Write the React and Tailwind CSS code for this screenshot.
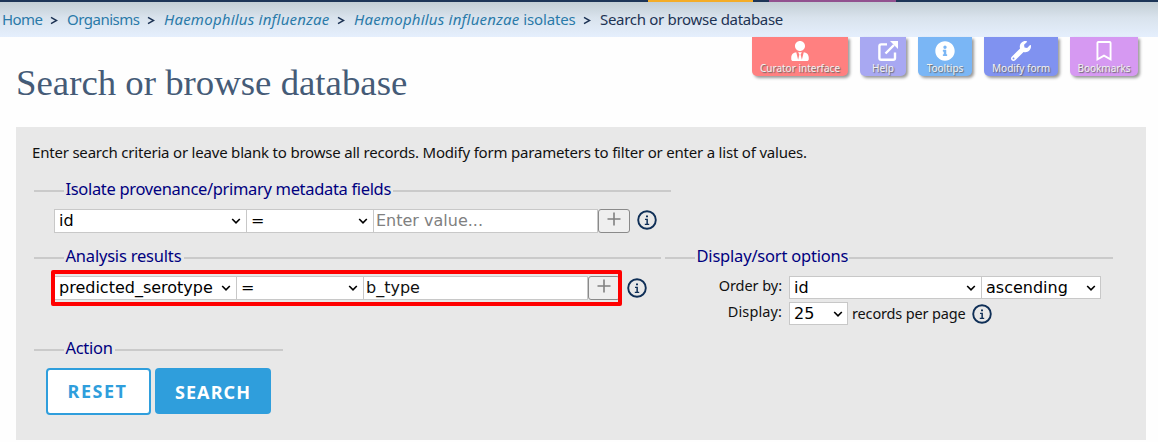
import { FaUserTie, FaWrench, FaRegBookmark, FaInfoCircle } from "react-icons/fa";

const Crumb = ({ children, className = "" }) => (
  <span className={`shrink-0 whitespace-nowrap ${className}`}>{children}</span>
);

const Sep = () => (
  <span className="flex w-[27px] shrink-0 justify-center">
    <svg width="9" height="10" viewBox="0 0 9 10" className="mt-[2px]">
      <path d="M2 1.4 7.6 4.5 2 7.6" fill="none" stroke="#1d3354" strokeWidth="1.5" />
    </svg>
  </span>
);

const Tab = ({ label, icon, className }) => (
  <div className={`flex h-[39px] flex-col items-center rounded-b-[5px] pt-[3px] text-white shadow-[2px_2px_3px_#999] ${className}`}>
    <div className="flex h-[22px] items-center justify-center">{icon}</div>
    <span className="text-[10px] leading-[13px] whitespace-nowrap text-[#f2f2f2] [text-shadow:1px_1px_1px_#666]">{label}</span>
  </div>
);

const ExternalIcon = () => (
  <svg width="22" height="22" viewBox="0 0 22 22" className="mb-px ml-[9px] shrink-0" fill="none" stroke="white" strokeWidth="2.4">
    <path d="M10 4.4H4.2Q2.4 4.4 2.4 6.2V18Q2.4 19.8 4.2 19.8H16.2Q18 19.8 18 18V12.5" />
    <path d="M8.5 13.5 17 5" />
    <path d="M13 1H21V9Z" fill="white" stroke="none" />
  </svg>
);

const Legend = ({ children, className, textClass = "" }) => (
  <div className={`flex h-6 items-center text-[16.5px] text-[#00007f] ${className}`}>
    <span className="mt-[4px] mr-[1.5px] h-[2px] w-[30px] shrink-0 bg-[#cacaca]" />
    <span className={`shrink-0 whitespace-nowrap ${textClass}`}>{children}</span>
    <span className="mt-[4px] h-[2px] flex-1 bg-[#cacaca]" />
  </div>
);

const Select = ({ children, className }) => (
  <div className={`flex shrink-0 items-center justify-between border border-[#c8c8c8] bg-white pr-[4px] pl-1 font-['DejaVu_Sans',sans-serif] text-[16px] leading-5 text-black ${className}`}>
    <span>{children}</span>
    <svg width="10" height="7" viewBox="0 0 10 7" className="mt-[1px]">
      <path d="M1.2 1 5 4.9 8.8 1" fill="none" stroke="#000" strokeWidth="1.6" />
    </svg>
  </div>
);

const Input = ({ children, className }) => (
  <div className={`flex h-6 shrink-0 items-center border border-[#c8c8c8] bg-white pl-[2px] font-['DejaVu_Sans',sans-serif] text-[16px] leading-5 ${className}`}>
    {children}
  </div>
);

const Plus = () => (
  <div className="flex h-6 w-8 shrink-0 justify-center rounded-[3px] border border-[#8a8a8a] bg-[#efefef]">
    <svg width="14" height="14" viewBox="0 0 14 14" className="mt-[2px]">
      <path d="M7 .5V13.5M.5 7H13.5" stroke="#808080" strokeWidth="1.6" />
    </svg>
  </div>
);

const Info = ({ className }) => (
  <svg width="20" height="20" viewBox="0 0 20 20" className={`shrink-0 ${className}`}>
    <circle cx="10" cy="10" r="8.8" fill="none" stroke="#0f2f57" strokeWidth="1.9" />
    <path d="M9 5.4H11V7.3H9ZM8 8.8H10.9V13.8H12.2V15H7.8V13.8H9.4V10H8Z" fill="#0f2f57" />
  </svg>
);

export default function App() {
  return (
    <div className="flex h-[442px] w-[1158px] flex-col overflow-hidden bg-[#fefefe] font-['Noto_Sans',sans-serif] text-[#111]">
      <div className="flex h-[2px] shrink-0 bg-[#1d3557]">
        <span className="ml-[648px] w-[105px] bg-[#f4ac26]" />
        <span className="ml-4 w-[127px] bg-[#92518f]" />
      </div>
      <nav className="h-[35px] shrink-0 bg-[#e5effd]">
        <div className="flex h-[35px] w-full items-center bg-linear-to-b from-[#c3ced5] via-[#d9e3ed] via-45% to-[#e5effd] pl-[2px] text-[15px] text-[#2a7aa9]">
          <Crumb className="w-[38px] tracking-[-0.6px]">Home</Crumb>
          <Sep />
          <Crumb className="w-[70px] tracking-[-0.5px]">Organisms</Crumb>
          <Sep />
          <Crumb className="w-[163px] tracking-[0.22px] italic">Haemophilus influenzae</Crumb>
          <Sep />
          <Crumb className="w-[219px]"><i className="tracking-[0.22px]">Haemophilus influenzae</i><span className="tracking-[-0.15px]"> isolates</span></Crumb>
          <Sep />
          <Crumb className="tracking-[-0.3px] text-[#1d3354]">Search or browse database</Crumb>
        </div>
      </nav>
      <header className="flex h-[90px] shrink-0 items-start pl-4">
        <h1 className="mt-[24px] w-[736px] font-['Liberation_Serif',serif] text-[36.8px] leading-[44px] whitespace-nowrap text-[#455b77]">Search or browse database</h1>
        <Tab className="w-24 bg-[#ff8080]" label="Curator interface" icon={<FaUserTie size={20} />} />
        <Tab className="ml-3 w-[46px] bg-[#a8a8f2]" label="Help" icon={<ExternalIcon />} />
        <Tab className="ml-3 w-[54px] bg-[#7ab6f5]" label="Tooltips" icon={<FaInfoCircle size={20} />} />
        <Tab className="ml-3 w-[74px] bg-[#8092f0]" label="Modify form" icon={<FaWrench size={20} />} />
        <Tab className="ml-3 w-[68px] bg-[#d699f2]" label="Bookmarks" icon={<FaRegBookmark size={20} />} />
      </header>
      <main className="ml-4 h-[313px] w-[1130px] shrink-0 bg-[#e8e8e8] pl-[18px]">
        <p className="-ml-[2px] pt-[13px] text-[15px] leading-6 tracking-[-0.2px] whitespace-nowrap">Enter search criteria or leave blank to browse all records. Modify form parameters to filter or enter a list of values.</p>
        <Legend className="mt-[13px] w-[637px]" textClass="w-[327px] tracking-[-0.33px]">Isolate provenance/primary metadata fields</Legend>
        <div className="mt-[8px] flex items-center pl-5">
          <Select className="h-6 w-[193px] pr-[5px]">id</Select>
          <Select className="-ml-px h-6 w-[128px] pr-[5px]">=</Select>
          <Input className="-ml-px w-[225px] text-[#808080]">Enter value...</Input>
          <Plus />
          <Info className="mb-[3px] ml-[7px]" />
        </div>
        <div className="mt-[11px] flex">
          <section className="w-[627px]">
            <Legend textClass="w-[118px] tracking-[-0.2px]">Analysis results</Legend>
            <div className="relative mt-2 flex items-center pl-5">
              <Select className="h-6 w-[183px] pr-[5px]">predicted_serotype</Select>
              <Select className="-ml-px h-6 w-[128px] pr-[5px]">=</Select>
              <Input className="-ml-px w-[225px]">b_type</Input>
              <Plus />
              <Info className="ml-[7px]" />
              <div className="absolute -top-[6px] left-[17px] h-9 w-[571px] rounded-[2px] border-4 border-[#ff0000]" />
            </div>
          </section>
          <section className="ml-1 w-[448px]">
            <Legend textClass="w-[152px] tracking-[-0.2px]">Display/sort options</Legend>
            <div className="mt-2 flex h-[23px] items-center text-[14.5px]">
              <span className="mr-[7px] mb-1 w-[117px] text-right tracking-[-0.05px] whitespace-nowrap">Order by:</span>
              <Select className="h-[23px] w-[193px] pr-[5px]">id</Select>
              <Select className="-ml-px h-[23px] w-[120px]">ascending</Select>
            </div>
            <div className="mt-[3px] flex h-[23px] items-center text-[14.5px]">
              <span className="mr-[7px] mb-1 w-[117px] text-right tracking-[0.1px]">Display:</span>
              <Select className="h-[23px] w-[59px]">25</Select>
              <span className="ml-[4px] w-[120px] tracking-[-0.15px] whitespace-nowrap">records per page</span>
              <Info />
            </div>
          </section>
        </div>
        <Legend className="mt-[11px] w-[249px]" textClass="w-[49px] tracking-[-0.3px]">Action</Legend>
        <div className="mt-[8px] flex items-start gap-1 pl-3 text-[18px] font-bold">
          <button className="h-[47px] w-[105px] rounded-[4px] border-2 border-[#2f9edc] bg-white pr-[2px] tracking-[1.5px] text-[#2f9edc]">RESET</button>
          <button className="h-[46px] w-[116px] rounded-[4px] bg-[#2f9edc] pt-[2px] tracking-[1.1px] text-white">SEARCH</button>
        </div>
      </main>
    </div>
  );
}
